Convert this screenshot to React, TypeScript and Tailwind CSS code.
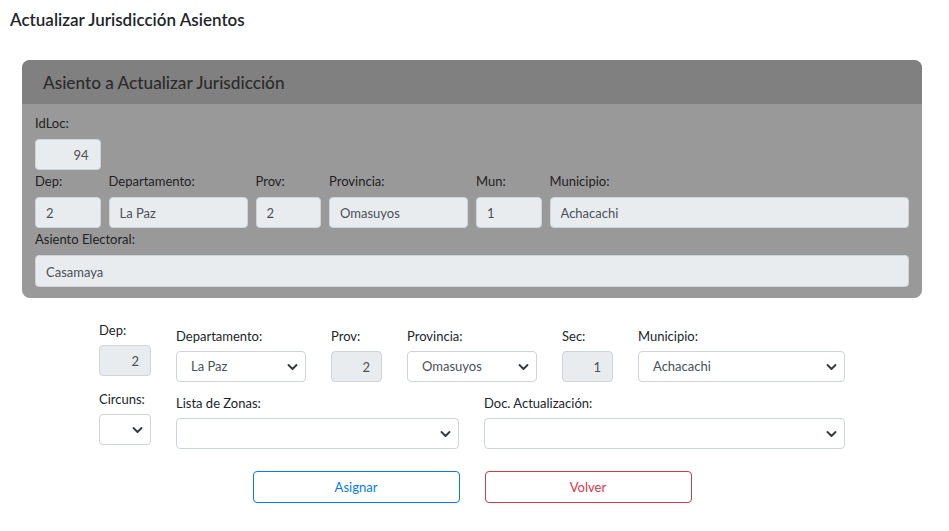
import React from 'react';

const font = { fontFamily: '"Segoe UI", Lato, "Noto Sans", sans-serif' };

function ChevronDown() {
  return (
    <svg className="pointer-events-none absolute right-[8px] top-1/2 -translate-y-1/2" width="11" height="7" viewBox="0 0 11 7" fill="none">
      <path d="M1.5 1.5l4 4 4-4" stroke="#343a40" strokeWidth="1.9" strokeLinecap="round" strokeLinejoin="round" />
    </svg>
  );
}

function Field({ label, value, right }: { label: string; value: string; right?: boolean }) {
  return (
    <div className="flex flex-col">
      <label className="pt-[1px] text-[13px] leading-[21px] text-[#222] mb-[5px]">{label}</label>
      <input
        readOnly
        value={value}
        className={`h-[31px] w-full rounded-[4px] border border-[#ced4da] bg-[#e9ecef] pt-[1px] text-[13px] text-[#495057] outline-none ${right ? 'text-right pr-[11px]' : 'pl-[10px]'}`}
      />
    </div>
  );
}

function LowerInput({ label, value, className = '' }: { label: string; value: string; className?: string }) {
  return (
    <div className={`flex flex-col ${className}`}>
      <label className="pt-[1px] text-[13px] leading-[21px] text-[#212529] mb-[4px]">{label}</label>
      <input
        readOnly
        value={value}
        className="h-[31px] w-full rounded-[4px] border border-[#ced4da] bg-[#e9ecef] pt-[1px] text-right pr-[11px] text-[13px] text-[#495057] outline-none"
      />
    </div>
  );
}

function LowerSelect({ label, value, className = '' }: { label: string; value?: string; className?: string }) {
  return (
    <div className={`flex flex-col ${className}`}>
      <label className="pt-[1px] text-[13px] leading-[21px] text-[#212529] mb-[4px]">{label}</label>
      <div className="relative">
        <select
          defaultValue={value ?? ''}
          className="h-[31px] w-full appearance-none rounded-[4px] border border-[#ced4da] bg-white pt-[1px] pl-[14px] pr-[28px] text-[13px] text-[#495057] outline-none"
        >
          <option value={value ?? ''}>{value ?? ''}</option>
        </select>
        <ChevronDown />
      </div>
    </div>
  );
}

export default function App() {
  return (
    <div className="min-h-[531px] w-[949px] bg-white" style={font}>
      <h1 className="pl-[10px] pt-[8px] text-[17px] leading-[24px] font-semibold text-[#212529]">
        Actualizar Jurisdicción Asientos
      </h1>

      <div className="ml-[22px] w-[900px]">
        {/* Asiento actual */}
        <div className="mt-[28px] overflow-hidden rounded-[8px] bg-[#999999]">
          <div className="flex h-[44px] items-center bg-[#808080] px-[21px]">
            <h2 className="pt-[2px] text-[17.2px] font-medium text-[#2b2b2b]">Asiento a Actualizar Jurisdicción</h2>
          </div>
          <div className="px-[13px] pt-[8px] pb-[11px]">
            <div className="grid grid-cols-12 gap-x-[8px]">
              <Field label="IdLoc:" value="94" right />
            </div>
            <div className="grid grid-cols-12 gap-x-[8px]">
              <Field label="Dep:" value="2" />
              <div className="col-span-2"><Field label="Departamento:" value="La Paz" /></div>
              <Field label="Prov:" value="2" />
              <div className="col-span-2"><Field label="Provincia:" value="Omasuyos" /></div>
              <Field label="Mun:" value="1" />
              <div className="col-span-5"><Field label="Municipio:" value="Achacachi" /></div>
            </div>
            <div className="flex flex-col">
              <label className="pt-[1px] text-[13px] leading-[21px] text-[#222] mb-[5px]">Asiento Electoral:</label>
              <input
                readOnly
                value="Casamaya"
                className="h-[32px] w-full rounded-[4px] border border-[#ced4da] bg-[#e9ecef] pt-[1px] pl-[10px] text-[13px] text-[#495057] outline-none"
              />
            </div>
          </div>
        </div>

        {/* Nueva jurisdicción */}
        <div className="mx-auto mt-[21px] w-[746px]">
          <div className="grid grid-cols-[52px_130px_51px_130px_51px_207px] items-start gap-x-[25px]">
            <LowerInput label="Dep:" value="2" />
            <LowerSelect label="Departamento:" value="La Paz" className="mt-[6px]" />
            <LowerInput label="Prov:" value="2" className="mt-[6px]" />
            <LowerSelect label="Provincia:" value="Omasuyos" className="mt-[6px]" />
            <LowerInput label="Sec:" value="1" className="mt-[6px]" />
            <LowerSelect label="Municipio:" value="Achacachi" className="mt-[6px]" />
          </div>
          <div className="mt-[10px] grid grid-cols-[52px_283px_361px] items-start gap-x-[25px]">
            <LowerSelect label="Circuns:" className="-mt-[4px]" />
            <LowerSelect label="Lista de Zonas:" />
            <LowerSelect label="Doc. Actualización:" />
          </div>
        </div>

        <div className="mt-[22px] flex justify-center gap-[25px]">
          <button className="h-[32px] w-[207px] rounded-[4px] border border-[#007bff] bg-white pt-[1px] text-[13px] text-[#007bff]">
            Asignar
          </button>
          <button className="h-[32px] w-[207px] rounded-[4px] border border-[#dc3545] bg-white pt-[1px] text-[13px] text-[#dc3545]">
            Volver
          </button>
        </div>
      </div>
    </div>
  );
}
